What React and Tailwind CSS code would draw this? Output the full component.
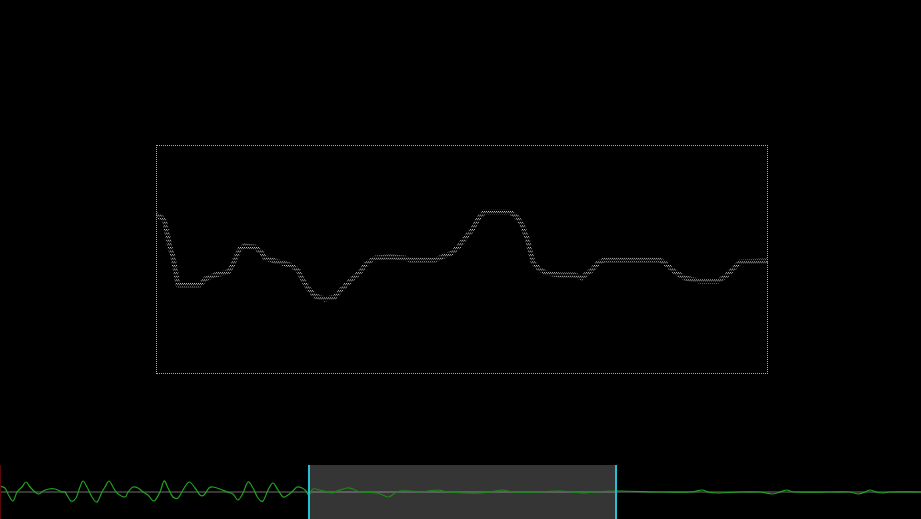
import React from "react";

// Trace shown inside the scope frame (page coordinates).
const trace = [
  [157, 215], [160, 217], [163, 218], [165, 222], [166, 229], [168, 237], [170, 247],
  [173, 257], [175, 268], [177, 279], [178, 285], [200, 285], [205, 279], [215, 275],
  [228, 272], [232, 266], [236, 257], [240, 249], [244, 246], [255, 247], [262, 253],
  [265, 258], [275, 261], [290, 265], [298, 270], [302, 278], [308, 288], [315, 296],
  [325, 299], [335, 297], [340, 291], [346, 285], [352, 279], [360, 272], [367, 263],
  [375, 258], [390, 257], [405, 258], [410, 260], [435, 260], [442, 257], [452, 253],
  [460, 245], [465, 238], [472, 230], [478, 219], [484, 212], [510, 212], [517, 217],
  [522, 225], [527, 238], [530, 250], [533, 262], [538, 268], [546, 273], [560, 275],
  [575, 275], [582, 278], [585, 275], [592, 270], [598, 263], [604, 260], [660, 260],
  [666, 264], [675, 272], [685, 278], [700, 281], [718, 281], [726, 276], [733, 269],
  [740, 262], [767, 261],
];

// Overview waveform samples (page coordinates), shifted to the strip below.
const wave = [
  [0, 486], [5, 488], [8, 494], [13, 501], [17, 492], [22, 487], [26, 482], [30, 487],
  [35, 492], [39, 494], [43, 491], [49, 489], [55, 489], [62, 492], [65, 492], [71, 501],
  [76, 498], [80, 487], [83, 481], [87, 487], [92, 497], [97, 502], [102, 492], [105, 487],
  [109, 481], [113, 487], [117, 493], [125, 497], [128, 492], [133, 487], [138, 488],
  [143, 492], [148, 495], [154, 501], [160, 492], [164, 481], [168, 488], [173, 497],
  [178, 498], [183, 490], [189, 482], [195, 488], [200, 495], [204, 495], [209, 488],
  [213, 487], [220, 489], [227, 492], [233, 494], [238, 500], [243, 493], [248, 482],
  [253, 488], [258, 498], [263, 501], [268, 490], [273, 483], [278, 490], [283, 497],
  [288, 495], [293, 491], [297, 487], [302, 488], [306, 491], [309, 495], [313, 489],
  [320, 490], [327, 492], [332, 493], [337, 491], [347, 488], [353, 489], [360, 492],
  [377, 493], [388, 497], [395, 493], [400, 491], [410, 491], [420, 492], [438, 490],
  [447, 492], [467, 493], [480, 493], [490, 492], [503, 490], [513, 492], [540, 492],
  [560, 491], [583, 493], [593, 492], [620, 491], [660, 492], [690, 492], [702, 490],
  [708, 492], [717, 493], [740, 492], [760, 492], [772, 494], [780, 492], [787, 490],
  [795, 492], [830, 492], [850, 492], [858, 494], [865, 492], [870, 490], [876, 492],
  [883, 493], [890, 492], [921, 492],
].map(([x, y]) => [x, y - 465]);

// Catmull-Rom spline through the samples, emitted as cubic Beziers.
function smoothPath(pts) {
  let d = `M${pts[0][0]},${pts[0][1]}`;
  for (let i = 0; i < pts.length - 1; i++) {
    const p0 = pts[i - 1] || pts[i];
    const p1 = pts[i];
    const p2 = pts[i + 1];
    const p3 = pts[i + 2] || p2;
    const c1x = p1[0] + (p2[0] - p0[0]) / 6;
    const c1y = p1[1] + (p2[1] - p0[1]) / 6;
    const c2x = p2[0] - (p3[0] - p1[0]) / 6;
    const c2y = p2[1] - (p3[1] - p1[1]) / 6;
    d += ` C${c1x},${c1y} ${c2x},${c2y} ${p2[0]},${p2[1]}`;
  }
  return d;
}

const tracePoints = trace.map((p) => p.join(",")).join(" ");
const wavePath = smoothPath(wave);

export default function App() {
  return (
    <div className="w-[921px] h-[519px] bg-black flex flex-col overflow-hidden">
      {/* scope view */}
      <div className="h-[465px] pt-[145px] pl-[156px]">
        <div className="relative w-[612px] h-[229px] border border-dotted border-[#a8a8a8]">
          <svg
            className="absolute -left-px -top-px"
            width="612"
            height="229"
            viewBox="156 145 612 229"
          >
            <defs>
              {/* scanline raster: rows of checkered dots every ~3.6px */}
              <pattern
                id="rows"
                patternUnits="userSpaceOnUse"
                x="0"
                y="211"
                width="2"
                height="3.6"
              >
                <rect x="0" y="0" width="1" height="1" fill="#c4c4c4" />
                <rect x="1" y="1" width="1" height="1" fill="#8c8c8c" />
              </pattern>
            </defs>
            <polyline
              points={tracePoints}
              fill="none"
              stroke="url(#rows)"
              strokeWidth="5"
              strokeLinejoin="round"
              strokeLinecap="round"
            />
          </svg>
        </div>
      </div>

      {/* overview strip with selection */}
      <div className="relative h-[54px] flex">
        <div className="w-[308px] border-l border-[#5c0808]" />
        <div className="w-[309px] bg-[#353535] border-x-2 border-[#1fc3d3]" />
        <div className="flex-1" />
        <svg className="absolute inset-0" width="921" height="54" viewBox="0 0 921 54">
          <defs>
            <clipPath id="sel">
              <rect x="310" y="0" width="305" height="54" />
            </clipPath>
            <clipPath id="outsideL">
              <rect x="1" y="0" width="307" height="54" />
            </clipPath>
            <clipPath id="outsideR">
              <rect x="617" y="0" width="304" height="54" />
            </clipPath>
          </defs>
          <g clipPath="url(#outsideL)">
            <line x1="0" y1="27" x2="921" y2="27" stroke="#6e6e6e" strokeWidth="1" />
            <path d={wavePath} fill="none" stroke="#1fa51f" strokeWidth="1.2" />
          </g>
          <g clipPath="url(#outsideR)">
            <line x1="0" y1="27" x2="921" y2="27" stroke="#6e6e6e" strokeWidth="1" />
            <path d={wavePath} fill="none" stroke="#1fa51f" strokeWidth="1.2" />
          </g>
          <g clipPath="url(#sel)">
            <line x1="0" y1="27" x2="921" y2="27" stroke="#8a8a8a" strokeWidth="1" />
            <path d={wavePath} fill="none" stroke="#1a8a1a" strokeWidth="1.2" />
          </g>
        </svg>
      </div>
    </div>
  );
}
